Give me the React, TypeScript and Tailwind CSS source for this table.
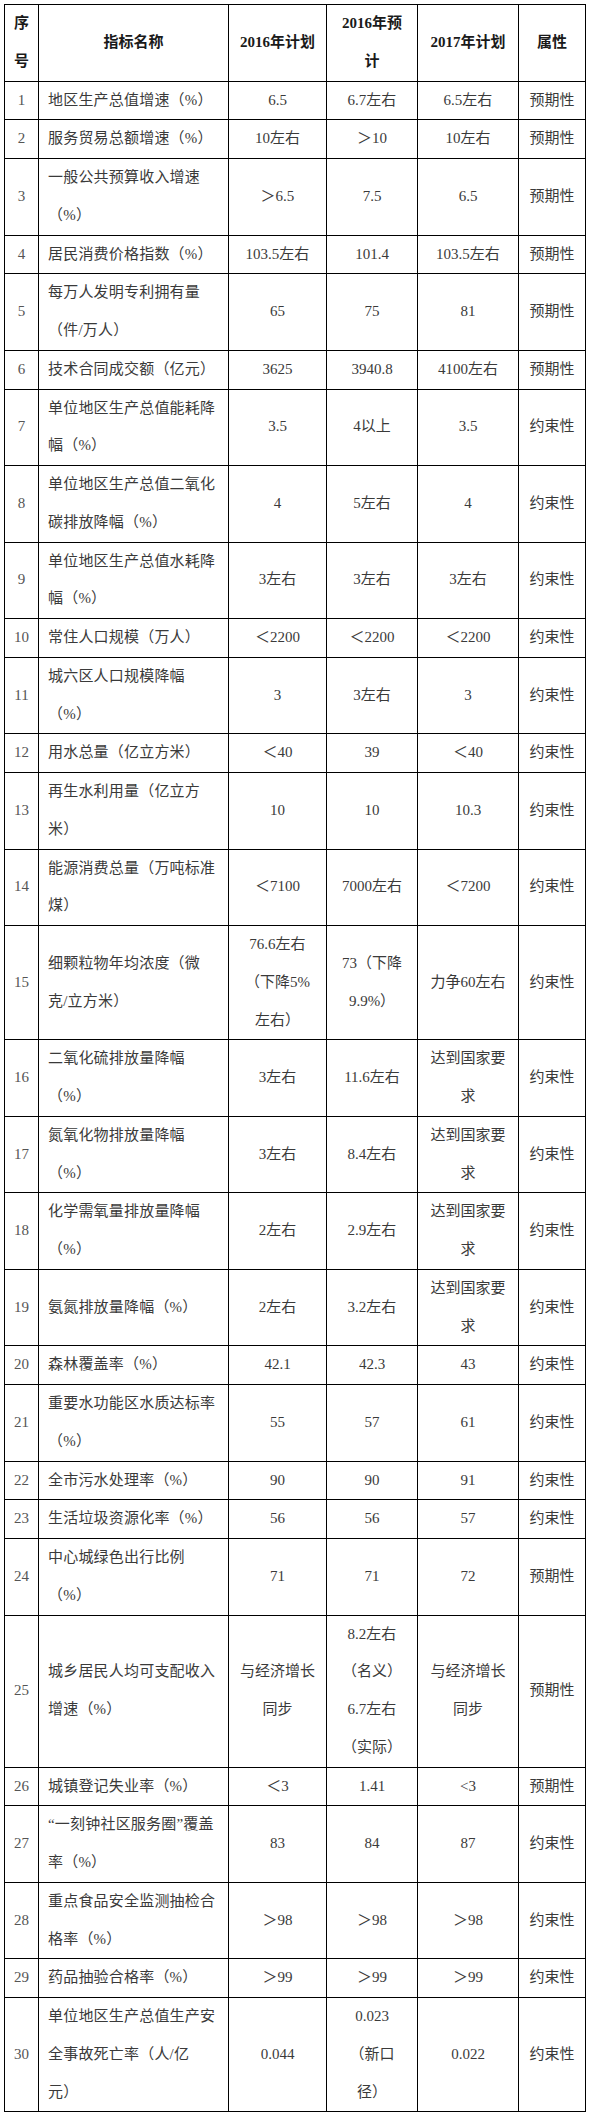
import React from 'react';

type Row = [string, string, string, string, string, string];

const rows: Row[] = [
  ['1', '地区生产总值增速（%）', '6.5', '6.7左右', '6.5左右', '预期性'],
  ['2', '服务贸易总额增速（%）', '10左右', '＞10', '10左右', '预期性'],
  ['3', '一般公共预算收入增速\n（%）', '＞6.5', '7.5', '6.5', '预期性'],
  ['4', '居民消费价格指数（%）', '103.5左右', '101.4', '103.5左右', '预期性'],
  ['5', '每万人发明专利拥有量\n（件/万人）', '65', '75', '81', '预期性'],
  ['6', '技术合同成交额（亿元）', '3625', '3940.8', '4100左右', '预期性'],
  ['7', '单位地区生产总值能耗降\n幅（%）', '3.5', '4以上', '3.5', '约束性'],
  ['8', '单位地区生产总值二氧化\n碳排放降幅（%）', '4', '5左右', '4', '约束性'],
  ['9', '单位地区生产总值水耗降\n幅（%）', '3左右', '3左右', '3左右', '约束性'],
  ['10', '常住人口规模（万人）', '＜2200', '＜2200', '＜2200', '约束性'],
  ['11', '城六区人口规模降幅\n（%）', '3', '3左右', '3', '约束性'],
  ['12', '用水总量（亿立方米）', '＜40', '39', '＜40', '约束性'],
  ['13', '再生水利用量（亿立方\n米）', '10', '10', '10.3', '约束性'],
  ['14', '能源消费总量（万吨标准\n煤）', '＜7100', '7000左右', '＜7200', '约束性'],
  ['15', '细颗粒物年均浓度（微\n克/立方米）', '76.6左右\n（下降5%\n左右）', '73（下降\n9.9%）', '力争60左右', '约束性'],
  ['16', '二氧化硫排放量降幅\n（%）', '3左右', '11.6左右', '达到国家要\n求', '约束性'],
  ['17', '氮氧化物排放量降幅\n（%）', '3左右', '8.4左右', '达到国家要\n求', '约束性'],
  ['18', '化学需氧量排放量降幅\n（%）', '2左右', '2.9左右', '达到国家要\n求', '约束性'],
  ['19', '氨氮排放量降幅（%）', '2左右', '3.2左右', '达到国家要\n求', '约束性'],
  ['20', '森林覆盖率（%）', '42.1', '42.3', '43', '约束性'],
  ['21', '重要水功能区水质达标率\n（%）', '55', '57', '61', '约束性'],
  ['22', '全市污水处理率（%）', '90', '90', '91', '约束性'],
  ['23', '生活垃圾资源化率（%）', '56', '56', '57', '约束性'],
  ['24', '中心城绿色出行比例\n（%）', '71', '71', '72', '预期性'],
  ['25', '城乡居民人均可支配收入\n增速（%）', '与经济增长\n同步', '8.2左右\n（名义）\n6.7左右\n（实际）', '与经济增长\n同步', '预期性'],
  ['26', '城镇登记失业率（%）', '＜3', '1.41', '<3', '预期性'],
  ['27', '“一刻钟社区服务圈”覆盖\n率（%）', '83', '84', '87', '约束性'],
  ['28', '重点食品安全监测抽检合\n格率（%）', '＞98', '＞98', '＞98', '约束性'],
  ['29', '药品抽验合格率（%）', '＞99', '＞99', '＞99', '约束性'],
  ['30', '单位地区生产总值生产安\n全事故死亡率（人/亿\n元）', '0.044', '0.023\n（新口\n径）', '0.022', '约束性'],
];

const cell = 'border border-black p-0 align-middle whitespace-pre-line';

export default function App() {
  return (
    <div
      className="bg-white pl-1 pt-1 text-[15px] leading-[37.75px] text-[#3a3a3a]"
      style={{ fontFamily: '"Liberation Serif", "Noto Sans CJK SC", serif' }}
      lang="zh-CN"
    >
      <table className="w-[581px] table-fixed border-collapse">
        <colgroup>
          <col className="w-[34px]" />
          <col className="w-[190px]" />
          <col className="w-[98px]" />
          <col className="w-[91px]" />
          <col className="w-[101px]" />
          <col className="w-[67px]" />
        </colgroup>
        <thead>
          <tr className="font-bold text-[#1a1a1a]">
            <th className={`${cell} text-center`}>{'序\n号'}</th>
            <th className={`${cell} text-center`}>指标名称</th>
            <th className={`${cell} text-center`}>2016年计划</th>
            <th className={`${cell} text-center`}>{'2016年预\n计'}</th>
            <th className={`${cell} text-center`}>2017年计划</th>
            <th className={`${cell} text-center`}>属性</th>
          </tr>
        </thead>
        <tbody>
          {rows.map(([no, name, plan16, est16, plan17, kind]) => (
            <tr key={no}>
              <td className={`${cell} text-center text-[#555]`}>{no}</td>
              <td className={`${cell} pl-[9px] text-left tracking-[0.2px]`}>{name}</td>
              <td className={`${cell} text-center`}>{plan16}</td>
              <td className={`${cell} text-center`}>{est16}</td>
              <td className={`${cell} text-center`}>{plan17}</td>
              <td className={`${cell} text-center`}>{kind}</td>
            </tr>
          ))}
        </tbody>
      </table>
    </div>
  );
}
